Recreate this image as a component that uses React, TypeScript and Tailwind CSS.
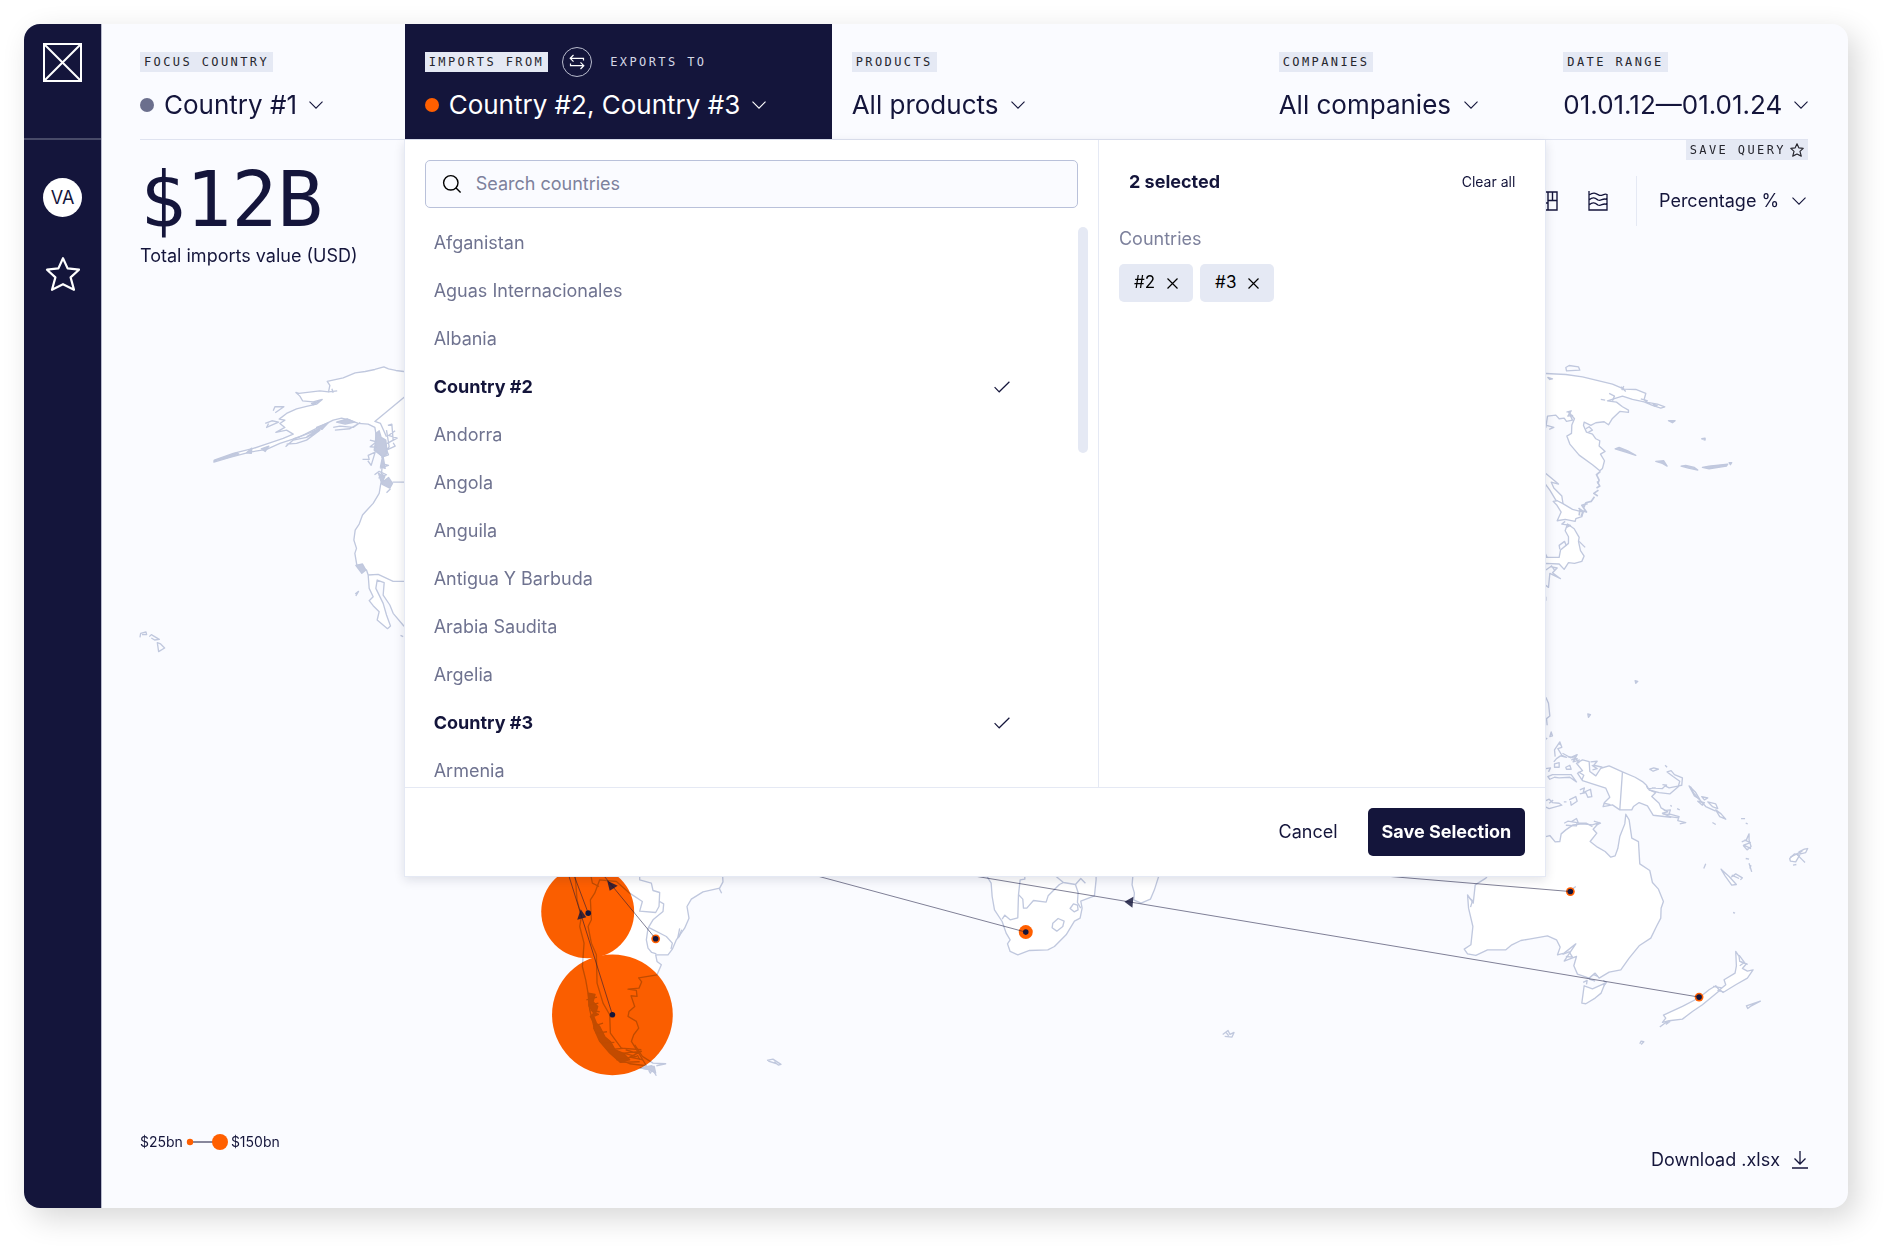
import { useState, type ReactNode } from "react";

type Country = { name: string; short?: string };

const COUNTRIES: Country[] = [
  { name: "Afganistan" },
  { name: "Aguas Internacionales" },
  { name: "Albania" },
  { name: "Country #2", short: "#2" },
  { name: "Andorra" },
  { name: "Angola" },
  { name: "Anguila" },
  { name: "Antigua Y Barbuda" },
  { name: "Arabia Saudita" },
  { name: "Argelia" },
  { name: "Country #3", short: "#3" },
  { name: "Armenia" },
];

function Chevron({ className = "" }: { className?: string }) {
  return (
    <svg className={`h-2 w-3.5 shrink-0 ${className}`} viewBox="0 0 14 8" fill="none" stroke="currentColor" strokeWidth="1.1" aria-hidden="true">
      <path d="M0.5 0.6 7 7.2 13.5 0.6" />
    </svg>
  );
}

function Star({ className = "", strokeWidth = 2 }: { className?: string; strokeWidth?: number }) {
  return (
    <svg className={className} viewBox="0 0 36 36" fill="none" stroke="currentColor" strokeWidth={strokeWidth} strokeLinejoin="round" aria-hidden="true">
      <path d="M18 2.2 22.6 12.4 34 13.7 25.6 21.4 29 33.8 18 28.2 7 33.8 10.4 21.4 2 13.7 13.4 12.4Z" />
    </svg>
  );
}

function Tag({ children, plain = false }: { children: ReactNode; plain?: boolean }) {
  return (
    <span
      className={`flex h-5 items-center px-1 font-['DejaVu_Sans_Mono',monospace] text-xs tracking-[0.2em] whitespace-nowrap uppercase ${
        plain ? "text-[#d5d8e6]" : "bg-[#e5e9f4] text-[#26262e]"
      }`}
    >
      {children}
    </span>
  );
}

function Filter({ id, label, value, span, dot = false }: { id: string; label: string; value: string; span: string; dot?: boolean }) {
  return (
    <div className={`${span} px-5 pt-6`}>
      <label htmlFor={id} className="flex h-7 items-center">
        <Tag>{label}</Tag>
      </label>
      <div className="mt-3 flex items-center gap-2.5">
        {dot && <span className="size-3.5 shrink-0 rounded-full bg-[#6b6f8d]" />}
        <div className="relative flex items-center">
          <select id={id} className="cursor-pointer appearance-none bg-transparent pr-[26px] text-[26px] leading-[34px]">
            <option>{value}</option>
          </select>
          <Chevron className="pointer-events-none absolute right-0" />
        </div>
      </div>
    </div>
  );
}

function Sidebar() {
  return (
    <aside className="relative z-10 flex w-[78px] shrink-0 flex-col items-center border-r border-[#b9bccd] bg-[#14153b] text-white">
      <div className="flex h-[116px] w-full justify-center border-b-2 border-[#484a68] pt-[19px]">
        <a href="#" aria-label="Home" className="h-10">
          <svg className="size-[39px]" viewBox="0 0 39 39" fill="none" stroke="currentColor" strokeWidth="2" aria-hidden="true">
            <path d="M1 1H38V38H1ZM1 1 38 38M38 1 1 38" />
          </svg>
        </a>
      </div>
      <button type="button" className="mt-[38px] flex size-[39px] items-center justify-center rounded-full bg-white text-lg text-[#14153b]">
        VA
      </button>
      <button type="button" aria-label="Saved queries" className="mt-[39px]">
        <Star className="size-9" strokeWidth={2.2} />
      </button>
    </aside>
  );
}

/* Every group below is drawn on its own grid, three units to one map unit */
function WorldMap() {
  return (
    <svg className="absolute inset-0 h-full w-full" viewBox="102 24 1747 1184" aria-hidden="true">
      <g fill="#fff" stroke="#c0c8de" strokeWidth="4" strokeLinejoin="round">
        {/* North America */}
        <g transform="translate(120 340) scale(0.33333)">
          <path d="M900 98 852 94 828 91 806 86 792 80 765 88 736 94 706 98 670 113 622 124 630 136 626 155 600 152 575 155 537 160 528 157 540 168 548 182 580 185 607 178 590 192 560 199 530 206 500 220 478 237 495 240 480 250 495 262 468 277 500 270 520 282 490 295 450 308 400 325 340 340 283 360 282 366 330 352 390 336 440 328 480 310 540 290 590 265 640 240 665 234 690 240 715 250 745 252 765 262 770 290 763 330 790 350 785 400 795 410 783 430 778 460 760 490 745 506 728 525 718 552 706 570 702 600 710 625 705 640 711 675 740 690 745 705 748 745 760 770 748 782 760 797 778 815 772 840 803 866 812 858 800 825 790 790 768 745 772 720 793 728 790 765 810 795 820 820 852 858 900 890Z" />
          <path fill="none" d="M900 136 852 172 765 244 782 250 800 290M818 426H900M745 705 775 703 820 724H900M626 155 652 152M636 146 640 158" />
          <path fill="none" d="M460 212 465 200 492 200 466 218M436 250 456 242 476 246 440 262 446 250M497 320 520 300 560 292 600 270 560 300 530 310 500 312M520 296 566 280 606 262 560 290M640 262 660 258 700 262 720 248 690 266 645 270" />
          <path fill="#c3cadf" d="M283 362 350 338 357 342 318 354ZM380 338 396 324 394 340ZM424 326 447 318 436 334ZM590 262 625 248 606 268ZM650 246 682 236 704 246 676 252ZM575 190 596 184 580 194Z" />
          <path fill="#c3cadf" d="M768 280 778 272 784 292 798 300 802 340 790 350 796 385 782 380 788 350 766 330ZM776 400 792 408 790 424 806 412 818 430 810 444 786 432ZM708 676 728 672 738 690 726 700Z" />
          <path fill="none" d="M750 300 770 305 751 320 772 322M728 358 748 358 745 346 766 336 754 376 744 362M784 370 806 376 780 384M804 256 816 252 820 300 802 310 832 294 806 286 826 272M820 308 826 318 800 330 806 344 784 352M764 404 778 394 800 404 776 414M800 458 812 446M800 270 808 320 796 335" />
          <path fill="none" d="M60 892 62 880 78 876 80 884 66 884M88 890 94 884 118 898 104 900 94 894M112 908 122 912 134 924 116 935ZM706 762 716 754 708 768M842 886 850 890" />
        </g>

        {/* Siberia and Japan */}
        <g transform="translate(1530 340) scale(0.33333)">
          <path d="M20 98 50 100 110 103 160 110 250 132 285 147 320 148 350 160 345 178 355 187 385 192 407 200 395 204 370 196 345 185 310 178 280 168 258 175 235 182 262 186 280 200 298 210 298 217 272 214 250 235 238 254 225 245 200 248 185 256 165 246 163 256 172 276 190 282 200 296 212 302 210 318 228 334 214 342 226 362 220 385 212 392 190 374 150 345 122 312 113 288 127 280 128 255 136 236 118 215 130 240 112 244 105 234 90 236 80 225 55 228 50 262 20 262Z" />
          <path fill="none" d="M110 82 120 76 148 80 152 90 112 92ZM275 140 290 154M284 138 278 150M240 160 256 168 250 182M215 178 228 180M335 176 356 182M52 256 74 262 60 268M170 266 180 260 190 270 178 276M112 216 126 212 116 228 132 226" />
          <path d="M20 376 50 400 88 432 66 426 74 444 98 468 102 494 80 480 62 450 40 420Z" />
          <path d="M84 482 100 490 130 508 162 516 158 530 140 536 138 544 108 538 84 542 96 516 82 494 72 484Z" />
          <path d="M115 552 135 566 150 592 148 604 154 632 165 648 158 664 136 670 118 668 105 688 90 672 50 670 20 690V652H90L94 630 118 610 118 590 108 572Z" />
          <path fill="none" d="M108 544 98 552 124 556 112 562M150 604 168 622M92 628 90 616 106 604 112 618M50 690 64 680 84 684 70 698 94 716 62 700 58 742 50 736M66 676 76 690M48 640 54 652M50 770V782" />
          <path fill="none" strokeWidth="5" d="M214 394 202 404 210 420 206 432M204 424 212 438 202 444M208 450 194 460 206 468M196 470 186 484 170 488 164 502M176 490 158 496 172 516 152 510 150 526M148 504 162 514 156 528" />
          <path fill="#c3cadf" d="M258 326 270 322 296 332 320 346 290 336ZM380 364 404 362 414 378 400 370ZM456 378 470 376 496 382 506 390 478 384ZM520 382 540 378 596 372 592 378 540 386ZM600 368 608 368 604 374ZM418 242 438 242 430 248ZM518 296 528 294 528 300ZM372 192 384 196 376 198ZM56 112 70 116 62 118Z" />
        </g>

        {/* Oceania */}
        <g transform="translate(1450 660) scale(0.33333)">
          <path d="M250 540 290 530 302 527 318 546 332 545 336 522 350 510 372 495 400 492 430 495 450 488 432 508 443 520 423 545 445 562 468 575 485 592 498 588 506 566 512 530 527 492 530 463 540 480 548 535 568 545 572 612 602 632 610 668 628 688 643 725 636 745 635 775 622 800 605 835 570 858 540 895 515 930 480 937 450 955 438 940 420 955 385 943 374 918 382 890 345 904 380 852 345 880 325 885 333 862 322 840 295 828 240 838 215 842 188 855 170 870 115 870 80 887 55 882 45 868 65 855 71 800 58 745 55 705 72 730 78 675 110 655 150 600Z" />
          <path fill="none" d="M345 490 356 484 384 488 382 498 350 496M366 486 382 476 388 490 412 490 430 500M434 484 454 490 440 496M60 715 70 722 64 742M340 884 360 876 370 892 350 890M380 680 366 690" />
          <path d="M405 978 430 987 468 970 456 1000 438 1015 410 1032 398 1030Z" />
          <path fill="none" d="M402 968 414 962 412 974M462 962 472 968 464 978M432 944 446 950M420 958 438 964" />
          <path d="M860 875 870 890 872 905 892 912 880 926 895 934 912 930 895 955 860 975 822 998 812 990 830 975 825 960 858 940 862 918Z" />
          <path d="M800 978 812 992 790 1010 760 1035 730 1055 700 1078 660 1083 640 1088 650 1075 643 1066 700 1040 750 1014 780 990Z" />
          <path fill="none" d="M632 1102 650 1088 662 1086 650 1094M870 886 886 908 872 918M792 980 818 984M876 906 896 914M805 992 824 996M896 1046 892 1038 934 1024 904 1040ZM572 1152 576 1144 584 1146 576 1154" />
          <path d="M382 310 400 300 420 305 422 335 440 348 455 325 480 318 520 336 558 352 580 365 592 376 600 390 620 398 608 410 630 430 636 444 656 456 640 460 665 472 612 466 595 438 570 428 553 440 548 450 512 450 490 435 462 440 466 428 482 412 470 385 430 372 400 362 385 340 400 332Z" />
          <path fill="none" d="M520 336 512 450M340 280 362 292 376 290 390 310M362 294 384 284 372 306 392 300M424 306 444 304 434 316 460 322M428 316 444 326 430 330M388 336 404 346 398 360M464 430 484 434" />
          <path fill="none" d="M318 290 316 270 332 246 338 262 326 266 338 286 352 292 334 288 322 296 314 306M328 250 336 256M316 312 330 308 330 322 316 322ZM350 322 362 316 366 328 352 328ZM296 350 310 344 330 344 366 344 382 366 362 352 330 354 316 352 302 358ZM290 326 304 324 298 336M356 290 380 296M366 300 386 296" />
          <path fill="none" d="M290 112 298 130 302 168 292 176 294 196M302 230 306 216 310 228ZM290 238 294 234M290 422 300 418 310 428 330 430 338 436 300 446 290 442M344 426 352 426M360 420 380 410 384 424 366 436 364 424M392 390 406 384 402 398 424 388 428 410 416 412 410 398 392 402M300 430 312 420" />
          <path fill="none" d="M602 328 614 324 628 328 612 334ZM648 316 654 322M654 336 666 332 676 344 700 354 698 376 688 378 692 364 672 350ZM608 384 640 386 648 378 660 384 690 378 662 402 630 398 600 390M592 378 596 386 620 384M640 374 654 376" />
          <path d="M720 378 740 398 752 418 736 408ZM746 424 766 428 760 436ZM758 410 776 414 766 420ZM776 426 800 432 806 446 790 440ZM800 450 816 462 830 478 812 470Z" />
          <path fill="none" d="M724 380 734 400 770 440 800 454M790 488 800 494M644 452 664 450 660 462 690 470 686 482 710 488 692 492M664 436 668 440M684 446 692 450M660 470 690 474M640 462 664 464" />
          <path d="M816 628 840 650 862 674 848 676 828 648Z" />
          <path fill="none" d="M846 652 860 642 880 654 874 660M848 646 870 656M764 626 770 612M876 476 888 476M890 490 896 492M878 546 892 540 900 522 900 540 906 560 894 570 882 556M886 540 904 548 884 556 906 566M890 596 900 598M900 610 908 636M906 616 902 626M852 758 858 760M560 70 558 62 566 64ZM418 172 416 162 424 164Z" />
          <path d="M1022 596 1036 582 1052 586 1040 606 1024 604ZM1050 576 1066 568 1076 566 1070 578 1054 582Z" />
          <path fill="none" d="M1044 584 1060 600 1068 608M1032 616 1042 614M1024 592 1060 574" />
        </g>

        {/* South America */}
        <g transform="translate(520 860) scale(0.33333)">
          <path d="M165 30 172 120 185 170 180 200 193 250 188 320 198 360 205 400 210 450 225 510 250 550 290 595 330 612 380 618 352 572 335 545 342 525 357 505 350 485 325 470 328 455 345 440 334 408 352 410 350 392 325 388 358 385 366 366 357 354 412 345 425 315 412 305 408 285 445 285 458 268 470 240 495 205 508 175 502 140 515 118 550 96 600 85 610 66 608 30Z" />
          <path fill="none" d="M385 205 380 240 385 265 396 278 410 282M385 202 440 230 458 250 454 268M385 205 400 180 430 155 432 132 420 125M360 30V60L395 70 400 92 420 98 418 140 408 158 360 154 368 125 330 100 290 65 240 60 225 100 212 120 215 180 205 200 215 250 230 285 232 370 250 430 270 465 272 520 290 545 305 565 365 570M210 30 218 70 238 80M598 84 606 100M480 206 474 236M486 210 478 232M742 602 760 598 784 614 776 616 764 606M746 604 772 612" />
          <path fill="#c3cadf" d="M206 400 226 404 220 426 234 440 228 460 236 464 222 470 230 490 240 500 256 532 272 545 286 570 310 580 330 600 300 606 270 580 240 545 222 505 226 496 212 470 222 460 208 440Z" />
          <path fill="none" d="M200 420 232 412M206 436 236 430M212 452 240 456M220 500 250 490M228 520 262 516M244 550 284 548M262 570 310 566M290 600 350 590 310 580 365 575 330 592 370 600M300 608 360 606M318 570 350 580 360 600M345 555 368 590 400 610 438 612 410 618M360 624 400 632 410 648M376 612 392 640 404 618" />
          <path fill="#c3cadf" d="M362 624 396 618 404 622 408 640 390 630Z" />
        </g>

        {/* Southern Africa, Madagascar, Kerguelen */}
        <g transform="translate(940 860) scale(0.33333)">
          <path d="M130 30 155 70 158 110 165 150 188 185 200 220 212 240 204 252 212 275 235 285 270 272 325 270 345 260 380 225 405 184 422 175 428 145 424 124 465 108 470 60V30Z" />
          <path fill="none" d="M188 178 196 166 212 180 235 174 237 105 242 60 256 58V30M238 105 250 118 252 145 262 145 282 122 320 127 326 108 360 74 372 68 350 50M372 68 408 74 424 56 438 70M408 74 416 98 414 128 424 145M340 190 356 176 374 184 370 200 352 214 338 204ZM392 146 402 132 414 136 416 150 404 156Z" />
          <path d="M582 30 578 75 585 100 583 120 605 130 633 118 645 90 664 30Z" />
          <path fill="none" d="M850 524 866 512 872 524 884 518 878 532 856 530M860 518 868 528" />
        </g>
      </g>

      <g fill="#ff5f00" className="mix-blend-multiply">
        <circle cx="588" cy="912" r="46.5" />
        <circle cx="612.7" cy="1015" r="60.4" />
      </g>
      <g fill="#ff5f00">
        <circle cx="656" cy="939" r="4.4" />
        <circle cx="1026.3" cy="932.3" r="7" />
        <circle cx="1571.2" cy="891.7" r="4.4" />
        <circle cx="1700" cy="997.3" r="4.4" />
      </g>
      <g stroke="#14153b" strokeOpacity="0.6" strokeWidth="0.9">
        <path d="M612.7 1015 566 866M588.5 913.3 570 864M656 939 596 866M1026.3 932.3 780 866M1571.2 891.7 1300 869M1700 997.3 920 867" />
      </g>
      <g fill="#14153b" fillOpacity="0.82">
        <path d="M581 909.5 577.5 920 586.5 917.5ZM607.5 881 618 886 610 891ZM1125 902 1134 897 1133 908Z" />
      </g>
      <g fill="#14153b">
        <circle cx="588.5" cy="913.3" r="2.8" />
        <circle cx="612.7" cy="1015" r="2.8" />
        <circle cx="656" cy="939" r="2.8" />
        <circle cx="1026.3" cy="932.3" r="2.8" />
        <circle cx="1571.2" cy="891.7" r="2.8" />
        <circle cx="1700" cy="997.3" r="2.8" />
      </g>
    </svg>
  );
}

type PickerProps = {
  selected: string[];
  onToggle: (name: string) => void;
  onClear: () => void;
};

function CountryPicker({ selected, onToggle, onClear }: PickerProps) {
  const [search, setSearch] = useState("");
  const visible = COUNTRIES.filter((c) => c.name.toLowerCase().includes(search.toLowerCase()));

  return (
    <div className="absolute top-full left-1/6 z-20 -ml-px w-[calc(66.667%+4px)] border-x border-b border-[#e5e9f4] bg-white shadow-[0_3px_10px_rgba(20,21,59,0.12)]">
      <div className="grid grid-cols-[14fr_9fr]">
        <div className="border-r border-[#e5e9f4] pt-5">
          <label className="mr-5 ml-5 flex h-12 items-center gap-3.5 rounded-[5px] border border-[#b9c1da] bg-[#fafbff] px-4">
            <svg className="size-5 shrink-0 text-black" viewBox="0 0 20 20" fill="none" stroke="currentColor" strokeWidth="1.4" aria-hidden="true">
              <circle cx="8.8" cy="8.8" r="7.2" />
              <path d="M13.8 13.8 18.6 18.6" />
            </svg>
            <input
              type="text"
              aria-label="Search countries"
              placeholder="Search countries"
              value={search}
              onChange={(e) => setSearch(e.target.value)}
              className="w-full bg-transparent text-lg outline-none placeholder:text-[#7d819c]"
            />
          </label>
          <div className="mt-[11px] flex pr-2.5 pl-5">
            <ul className="h-[568px] flex-1 overflow-y-auto [scrollbar-width:none]">
              {visible.map((c) => {
                const checked = selected.includes(c.name);
                return (
                  <li key={c.name}>
                    <label
                      className={`relative flex h-12 cursor-pointer items-center justify-between pr-[68px] pl-[9px] text-lg ${
                        checked ? "font-bold" : "text-[#6f7390]"
                      }`}
                    >
                      <input type="checkbox" className="sr-only" checked={checked} onChange={() => onToggle(c.name)} />
                      {c.name}
                      {checked && (
                        <svg className="h-3 w-4" viewBox="0 0 16 12" fill="none" stroke="currentColor" strokeWidth="1.2" aria-hidden="true">
                          <path d="M0.6 6.2 5.2 10.8 15.4 0.8" />
                        </svg>
                      )}
                    </label>
                  </li>
                );
              })}
            </ul>
            <div className="mt-2 h-[226px] w-2.5 rounded-full bg-[#e5e9f4]" />
          </div>
        </div>

        <div className="px-5 pt-7">
          <div className="flex items-center justify-between px-2.5 leading-7">
            <h2 className="text-lg leading-7 font-bold">{selected.length} selected</h2>
            <button type="button" onClick={onClear} className="cursor-pointer text-sm">
              Clear all
            </button>
          </div>
          <h3 className="mt-[29px] text-lg leading-7 text-[#7d819c]">Countries</h3>
          <ul className="mt-[11px] flex flex-wrap gap-[7px]">
            {COUNTRIES.filter((c) => selected.includes(c.name)).map((c) => (
              <li key={c.name} className="flex h-[38px] items-center gap-3 rounded-[5px] bg-[#e5e9f4] px-[15px] text-[17px] text-black">
                {c.short ?? c.name}
                <button type="button" aria-label={`Remove ${c.name}`} onClick={() => onToggle(c.name)} className="cursor-pointer">
                  <svg className="size-[11px]" viewBox="0 0 11 11" stroke="currentColor" strokeWidth="1.2" aria-hidden="true">
                    <path d="M0.5 0.5 10.5 10.5M10.5 0.5 0.5 10.5" />
                  </svg>
                </button>
              </li>
            ))}
          </ul>
        </div>
      </div>

      <div className="flex items-center justify-end gap-[30px] border-t border-[#e5e9f4] p-5">
        <button type="button" className="cursor-pointer text-lg">
          Cancel
        </button>
        <button type="button" className="h-12 cursor-pointer rounded-[5px] bg-[#14153b] px-3.5 text-lg font-bold text-white">
          Save Selection
        </button>
      </div>
    </div>
  );
}

export default function App() {
  const [open, setOpen] = useState(true);
  const [selected, setSelected] = useState<string[]>(["Country #2", "Country #3"]);

  const toggle = (name: string) => {
    setSelected((prev) => (prev.includes(name) ? prev.filter((n) => n !== name) : [...prev, name]));
  };

  return (
    <div className="flex min-h-screen bg-white pt-6 pr-10 pb-10 pl-6 font-[Inter,sans-serif] text-[#14153b]">
      <div className="flex flex-1 overflow-hidden rounded-2xl bg-[#fafbff] shadow-[8px_10px_30px_rgba(0,0,0,0.16)]">
        <Sidebar />

        <main className="relative flex flex-1 flex-col pr-5 pl-[18px]">
          <WorldMap />

          <header className="relative z-10">
            <div className="grid h-[115px] grid-cols-12">
              <Filter id="focus" label="Focus country" value="Country #1" span="col-span-2" dot />
              <div className="col-span-3 bg-[#14153b] px-5 pt-6 text-white">
                <div className="flex h-7 items-center gap-3.5">
                  <Tag>Imports from</Tag>
                  <button type="button" aria-label="Switch direction" className="flex size-[30px] cursor-pointer items-center justify-center rounded-full border border-[#b9bccd]">
                    <svg className="size-4" viewBox="0 0 16 16" fill="none" stroke="currentColor" strokeWidth="1.2" aria-hidden="true">
                      <path d="M4.5 1 1.2 4.3 4.5 7.6M1.2 4.3H14.5V6.5M11.5 8.4 14.8 11.7 11.5 15M14.8 11.7H1.5V9.5" />
                    </svg>
                  </button>
                  <Tag plain>Exports to</Tag>
                </div>
                <button
                  type="button"
                  aria-expanded={open}
                  onClick={() => setOpen(!open)}
                  className="mt-3 flex cursor-pointer items-center gap-2.5 text-[26px] leading-[34px] whitespace-nowrap"
                >
                  <span className="size-3.5 rounded-full bg-[#ff5f00]" />
                  {selected.join(", ")}
                  <Chevron className="ml-0.5" />
                </button>
              </div>
              <Filter id="products" label="Products" value="All products" span="col-span-3" />
              <Filter id="companies" label="Companies" value="All companies" span="col-span-2" />
              <Filter id="dates" label="Date range" value="01.01.12—01.01.24" span="col-span-2" />
            </div>
            <div className="mx-5 h-px bg-[#dfe3f0]" />
            {open && <CountryPicker selected={selected} onToggle={toggle} onClear={() => setSelected([])} />}
          </header>

          <div className="relative flex justify-between px-5">
            <div className="pt-[22px]">
              <p className="font-['DejaVu_Sans_Mono',monospace] text-[76px] leading-[76px]">$12B</p>
              <p className="mt-1.5 text-lg leading-6">Total imports value (USD)</p>
            </div>

            <div className="flex flex-col items-end">
              <button type="button" className="flex cursor-pointer items-center bg-[#e5e9f4] pr-1 text-[#26262e]">
                <Tag>Save query</Tag>
                <Star className="size-3.5" strokeWidth={3} />
              </button>
              <div className="mt-4 flex h-[50px] items-center">
                <button type="button" aria-label="Treemap" className="mr-[30px] cursor-pointer">
                  <svg className="size-5" viewBox="0 0 20 20" fill="none" stroke="currentColor" strokeWidth="1.4" aria-hidden="true">
                    <path d="M1 1H19V19H1ZM10 1V19M10 9.5H19M14.5 1V9.5M1 12H10" />
                  </svg>
                </button>
                <button type="button" aria-label="Area chart" className="mr-7 cursor-pointer">
                  <svg className="size-5" viewBox="0 0 20 20" fill="none" stroke="currentColor" strokeWidth="1.3" aria-hidden="true">
                    <path d="M1 0V19H19V3.5C16 2 14 5.5 11 4.2 8 2.5 6 .5 1 4M1 9C5 5.5 7 7 10 9 13 10.5 15 6.5 19 8.5M1 14C5 10.5 7 12 10 14 13 15.5 15 11.5 19 13.5" />
                  </svg>
                </button>
                <span className="h-full w-px bg-[#e5e9f4]" />
                <div className="relative ml-[22px] flex items-center">
                  <select aria-label="Unit" className="cursor-pointer appearance-none bg-transparent pr-7 text-lg leading-6">
                    <option>Percentage %</option>
                  </select>
                  <Chevron className="pointer-events-none absolute right-0.5" />
                </div>
              </div>
            </div>
          </div>

          <div className="relative mt-auto flex items-start justify-between px-5 pb-9">
            <div className="flex items-center text-sm">
              $25bn
              <svg className="mx-[3px] h-4 w-[42px]" viewBox="0 0 42 16" aria-hidden="true">
                <path d="M4 8H30" stroke="#14153b" strokeWidth="1.2" />
                <circle cx="4" cy="8" r="3.2" fill="#ff5f00" />
                <circle cx="34" cy="8" r="8" fill="#ff5f00" />
              </svg>
              $150bn
            </div>
            <a href="#download" className="mt-4 flex items-center gap-3 text-lg leading-6">
              Download .xlsx
              <svg className="h-[18px] w-4" viewBox="0 0 16 18" fill="none" stroke="currentColor" strokeWidth="1.3" aria-hidden="true">
                <path d="M8 0V13M2.5 7.5 8 13 13.5 7.5M0 17H16" />
              </svg>
            </a>
          </div>
        </main>
      </div>
    </div>
  );
}
